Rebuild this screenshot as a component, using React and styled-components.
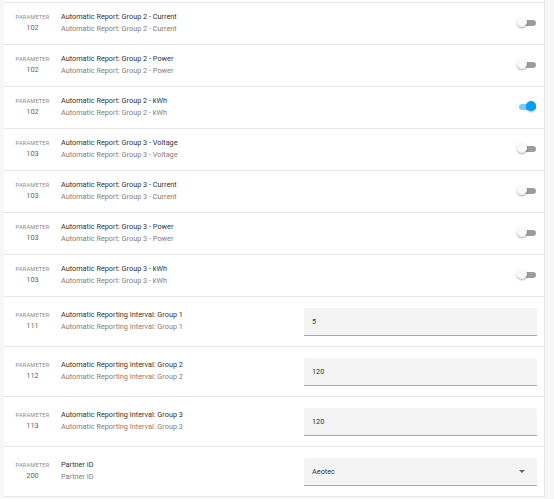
import React from 'react'
import styled, { createGlobalStyle } from 'styled-components'

const GlobalStyle = createGlobalStyle`
  html, body {
    margin: 0;
    padding: 0;
    background: #f7f7f7;
    font-family: Roboto, "Liberation Sans", sans-serif;
  }
`

const Page = styled.div`
  padding-left: 4px;
  width: 541px;
`

const Card = styled.div`
  background: #fff;
  border-right: 1px solid #e6e6e6;
  padding-top: 2px;
`

const Row = styled.div`
  display: flex;
  align-items: center;
  height: ${p => (p.tall ? 49 : 41)}px;
  border-top: 1px solid #e8e8e8;
  border-bottom: ${p => (p.last ? '1px solid #e8e8e8' : 'none')};
  padding-right: 8px;
`

const Param = styled.div`
  width: 57px;
  flex: none;
  display: flex;
  flex-direction: column;
  align-items: center;
  padding-bottom: 1px;
`

const ParamLabel = styled.span`
  font-size: 5.6px;
  letter-spacing: 0.2px;
  text-transform: uppercase;
  color: #8a8a8a;
  line-height: 9px;
`

const ParamNumber = styled.span`
  font-size: 7.4px;
  color: #666;
  line-height: 12px;
`

const Info = styled.div`
  flex: 1;
  display: flex;
  flex-direction: column;
  padding-bottom: 1px;
`

const Title = styled.span`
  font-size: 7.3px;
  color: #333;
  line-height: 12px;
`

const Subtitle = styled.span`
  font-size: 7.3px;
  color: #877d76;
  line-height: 12px;
`

const Switch = styled.div`
  position: relative;
  width: 19px;
  height: 11px;
  margin: 0 0 2px 0;
  flex: none;
`

const Track = styled.div`
  position: absolute;
  left: 2px;
  right: 0;
  top: 2.5px;
  height: 6px;
  border-radius: 3px;
  background: ${p => (p.on ? '#7cc9f5' : '#9e9e9e')};
`

const Thumb = styled.div`
  position: absolute;
  top: 0;
  left: ${p => (p.on ? '9px' : '0')};
  width: 10px;
  height: 10px;
  border-radius: 50%;
  background: ${p => (p.on ? '#059ff0' : '#fafafa')};
  box-shadow: 0 1px 2px rgba(0, 0, 0, 0.35);
`

const Field = styled.div`
  width: 233px;
  height: 28px;
  flex: none;
  display: flex;
  align-items: center;
  justify-content: space-between;
  box-sizing: border-box;
  margin-right: -1px;
  padding: 0 12px 0 8px;
  background: #f4f4f4;
  border-bottom: 1px solid #a8a8a8;
  border-radius: 2px 2px 0 0;
  font-size: 7.3px;
  color: #333;
`

const Caret = styled.span`
  width: 0;
  height: 0;
  border-left: 3px solid transparent;
  border-right: 3px solid transparent;
  border-top: 3px solid #666;
`

const toggles = [
  { param: 102, name: 'Automatic Report: Group 2 - Current', on: false },
  { param: 102, name: 'Automatic Report: Group 2 - Power', on: false },
  { param: 102, name: 'Automatic Report: Group 2 - kWh', on: true },
  { param: 103, name: 'Automatic Report: Group 3 - Voltage', on: false },
  { param: 103, name: 'Automatic Report: Group 3 - Current', on: false },
  { param: 103, name: 'Automatic Report: Group 3 - Power', on: false },
  { param: 103, name: 'Automatic Report: Group 3 - kWh', on: false }
]

const inputs = [
  { param: 111, name: 'Automatic Reporting Interval: Group 1', value: '5' },
  { param: 112, name: 'Automatic Reporting Interval: Group 2', value: '120' },
  { param: 113, name: 'Automatic Reporting Interval: Group 3', value: '120' }
]

const Head = ({ param, name }) => (
  <>
    <Param>
      <ParamLabel>Parameter</ParamLabel>
      <ParamNumber>{param}</ParamNumber>
    </Param>
    <Info>
      <Title>{name}</Title>
      <Subtitle>{name}</Subtitle>
    </Info>
  </>
)

const App = () => (
  <Page>
    <GlobalStyle />
    <Card>
      {toggles.map((t, i) => (
        <Row key={i}>
          <Head param={t.param} name={t.name} />
          <Switch>
            <Track on={t.on} />
            <Thumb on={t.on} />
          </Switch>
        </Row>
      ))}
      {inputs.map((t, i) => (
        <Row key={i} tall>
          <Head param={t.param} name={t.name} />
          <Field>{t.value}</Field>
        </Row>
      ))}
      <Row tall last>
        <Head param={200} name="Partner ID" />
        <Field>
          Aeotec
          <Caret />
        </Field>
      </Row>
    </Card>
  </Page>
)

export default App
